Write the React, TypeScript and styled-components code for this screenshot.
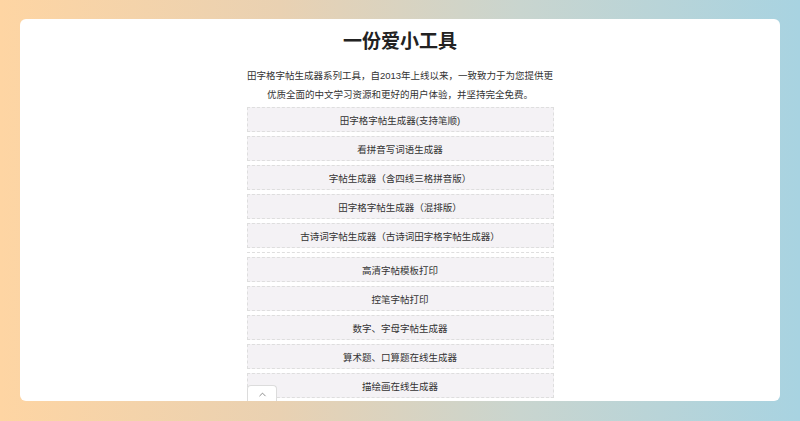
import React, { ReactElement } from "react";
import styled, { createGlobalStyle } from "styled-components";
import { ChevronUp } from "lucide-react";

const GlobalStyle = createGlobalStyle`
  * {
    box-sizing: border-box;
  }
  html,
  body {
    margin: 0;
    padding: 0;
  }
  body {
    font-family: "Liberation Sans", "Noto Sans CJK SC", sans-serif;
    color: #333;
  }
`;

const Page = styled.div`
  height: 421px;
  padding: 19px 20px 20px;
  background: linear-gradient(90deg, #fed5a3 0%, #e9d1b2 35%, #c9d5cf 65%, #a8d3e1 100%);
`;

const Card = styled.div`
  position: relative;
  height: 100%;
  background: #fff;
  border-radius: 6px;
  overflow: hidden;
  padding-top: 11px;
`;

const Content = styled.div`
  width: 307px;
  margin: 0 auto;
`;

const Title = styled.h1`
  margin: 0;
  font-size: 19px;
  line-height: 24px;
  font-weight: 700;
  text-align: center;
  color: #222;
`;

const Intro = styled.p`
  margin: 12px 0 3px;
  font-size: 9.5px;
  line-height: 19px;
  text-align: center;
  white-space: nowrap;
`;

const List = styled.div`
  display: flex;
  flex-direction: column;
  gap: 4px;
`;

const Item = styled.a`
  display: flex;
  align-items: center;
  justify-content: center;
  height: 25px;
  background: #f4f2f5;
  border: 1px dashed #dedede;
  font-size: 9.5px;
  color: #333;
  text-decoration: none;
  cursor: pointer;
`;

const Divider = styled.hr`
  margin: 0;
  border: 0;
  border-top: 1px dashed #dedede;
`;

const TopTab = styled.div`
  position: absolute;
  bottom: -1px;
  left: calc(50% - 153px);
  width: 30px;
  height: 17px;
  display: flex;
  align-items: center;
  justify-content: center;
  background: #fff;
  border: 1px solid #dcdcdc;
  border-bottom: 0;
  border-radius: 4px 4px 0 0;
  color: #666;
`;

const firstGroup = [
  "田字格字帖生成器(支持笔顺)",
  "看拼音写词语生成器",
  "字帖生成器（含四线三格拼音版）",
  "田字格字帖生成器（混排版）",
  "古诗词字帖生成器（古诗词田字格字帖生成器）",
];

const secondGroup = [
  "高清字帖模板打印",
  "控笔字帖打印",
  "数字、字母字帖生成器",
  "算术题、口算题在线生成器",
  "描绘画在线生成器",
];

const App = (): ReactElement => {
  return (
    <>
      <GlobalStyle />
      <Page>
        <Card>
          <Content>
            <Title>一份爱小工具</Title>
            <Intro>
              田字格字帖生成器系列工具，自2013年上线以来，一致致力于为您提供更
              <br />
              优质全面的中文学习资源和更好的用户体验，并坚持完全免费。
            </Intro>
            <List>
              {firstGroup.map((label) => (
                <Item key={label}>{label}</Item>
              ))}
              <Divider />
              {secondGroup.map((label) => (
                <Item key={label}>{label}</Item>
              ))}
            </List>
          </Content>
          <TopTab>
            <ChevronUp size={11} strokeWidth={1.6} />
          </TopTab>
        </Card>
      </Page>
    </>
  );
};

export default App;
